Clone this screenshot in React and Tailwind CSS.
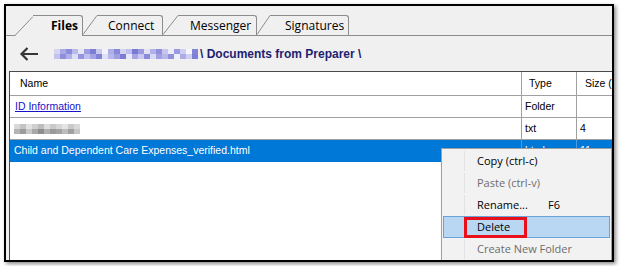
import React from "react";

const pathTop = ["#d5d5f3","#a9a9e6","#8c8cdc","#b9b9ec","#e6e6f8","#9d9de2","#7d7dd6","#c9c9f0","#f2f2fb","#aeaee8","#8888da","#d2d2f2","#bfbfee","#7a7ad4","#9b9be2","#e2e2f7","#b2b2ea","#8f8fde","#c5c5ef","#ededfa","#9a9ae1","#cfcff2","#f5f5fc","#8484d8"];
const pathBottom = ["#c3c3ee","#8e8edd","#b0b0e9","#dcdcf5","#9595df","#c0c0ee","#a3a3e4","#8181d7","#dedef6","#b7b7eb","#9e9ee3","#7c7cd5","#e8e8f9","#a6a6e5","#c8c8f0","#8b8bdb","#d9d9f5","#a0a0e3","#b6b6eb","#9090dd","#f0f0fb","#acace7","#d0d0f2","#7f7fd6"];
const rowTop = ["#d8d8d8","#c4c4c4","#e2e2e2","#cfcfcf","#bdbdbd","#dedede","#c9c9c9","#d6d6d6","#e4e4e4","#cacaca","#dadada"];
const rowBottom = ["#b4b4b4","#9c9c9c","#c8c8c8","#a8a8a8","#8e8e8e","#b0b0b0","#9a9a9a","#a4a4a4","#bcbcbc","#a0a0a0","#c6c6c6"];

const Mosaic = ({ top, bottom, w }) => (
  <div className="flex flex-col">
    <div className="flex">
      {top.map((c, i) => (
        <div key={i} className="h-[5px]" style={{ width: w, background: c }} />
      ))}
    </div>
    <div className="flex">
      {bottom.map((c, i) => (
        <div key={i} className="h-[5px]" style={{ width: w, background: c }} />
      ))}
    </div>
  </div>
);

// slanted left edge of a tab
const Slant = ({ w }) => (
  <svg width={w} height="20" viewBox={`0 0 ${w} 20`} className="block shrink-0">
    <polygon points={`0,20 ${w},0.5 ${w},20`} fill="#f0f0f0" />
    <line x1="0" y1="19.5" x2={w} y2="0.5" stroke="#8c8c8c" strokeWidth="1" />
  </svg>
);

const Tab = ({ label, slant, width, pl, active }) => (
  <div className={`flex items-end h-[20px] ${active ? "relative z-10 mb-[-1px] h-[21px]" : ""}`}>
    <Slant w={slant} />
    <div
      className={`h-full border-t border-r border-[#8c8c8c] rounded-tr-[3px] bg-[#f0f0f0] flex items-center text-[12px] text-black ${active ? "font-bold" : ""}`}
      style={{ width, paddingLeft: pl }}
    >
      {label}
    </div>
  </div>
);

const Row = ({ children, type, size, selected }) => (
  <div className={`flex h-[22px] border-b ${selected ? "bg-[#0078d7] text-white border-[#0078d7]" : "border-[#a0a0a0] text-black"}`}>
    <div className={`w-[512px] border-r ${selected ? "border-[#4a9be0]" : "border-[#a0a0a0]"} flex items-center pl-[4px]`}>
      {children}
    </div>
    <div className={`w-[55px] border-r ${selected ? "border-[#4a9be0]" : "border-[#a0a0a0]"} flex items-center pl-[3px]`}>{type}</div>
    <div className="flex-1 flex items-center pl-[3px]">{size}</div>
  </div>
);

const MenuItem = ({ label, extra, disabled, hot }) => (
  <div
    className={`relative mx-[1px] h-[22px] flex items-center border ${hot ? "bg-[#b9d7f3] border-[#6aa3dc]" : "border-transparent"}`}
  >
    <div className={`w-[21px] h-full shrink-0 ${hot ? "" : "border-r border-[#e2e2e2]"}`} />
    <div className={`pl-[12px] flex whitespace-nowrap ${disabled ? "text-[#6d6d6d]" : "text-black"}`}>
      <span className={extra ? "w-[71px]" : ""}>{label}</span>
      {extra && <span>{extra}</span>}
    </div>
    {hot && (
      <div className="absolute left-[20px] top-0 w-[63px] h-[21px] border-[3px] border-[#e8101a]" />
    )}
  </div>
);

export default function App() {
  return (
    <div className="w-[628px] h-[266px] bg-white pl-[4px] pt-[4px]">
      <div className="relative w-[610px] h-[258px] border-2 border-black bg-[#f0f0f0] overflow-hidden flex flex-col shadow-[2px_2px_4px_rgba(0,0,0,0.45)] font-['Open_Sans',sans-serif]">

        {/* TABS */}
        <div className="h-[30px] flex items-end border-b border-[#8c8c8c] shrink-0">
          <div className="w-[9px]" />
          <Tab label="Files" slant={18} width={50} pl={18} active />
          <Tab label="Connect" slant={14} width={66} pl={11} />
          <Tab label="Messenger" slant={15} width={79} pl={12} />
          <Tab label="Signatures" slant={13} width={79} pl={15} />
        </div>

        {/* PATH */}
        <div className="h-[35px] flex items-center pl-[13px] shrink-0">
          <svg width="20" height="14" viewBox="0 0 20 14" className="shrink-0">
            <path d="M19 7H2.5M8.5 1L2.5 7l6 6" fill="none" stroke="#363636" strokeWidth="2.2" />
          </svg>
          <div className="ml-[15px] mt-[1px]">
            <Mosaic top={pathTop} bottom={pathBottom} w={6} />
          </div>
          <span className="ml-[2px] text-[12px] font-bold text-[#1f1f70] font-['Liberation_Sans',Arial,sans-serif] whitespace-nowrap">
            \ Documents from Preparer \
          </span>
        </div>

        {/* LIST */}
        <div className="flex-1 ml-[3px] bg-white border-l border-t border-[#4a4a4a] font-['Liberation_Sans',Arial,sans-serif] text-[10.5px]">
          <div className="flex h-[24px] border-b border-[#a0a0a0] text-black">
            <div className="w-[512px] border-r border-[#a0a0a0] flex items-center pl-[10px]">Name</div>
            <div className="w-[55px] border-r border-[#a0a0a0] flex items-center pl-[7px]">Type</div>
            <div className="flex-1 flex items-center pl-[8px] whitespace-nowrap">Size (</div>
          </div>
          <Row type="Folder" size="">
            <span className="pl-[1px] text-[#1515c8] underline">ID Information</span>
          </Row>
          <Row type="txt" size="4">
            <Mosaic top={rowTop} bottom={rowBottom} w={6} />
          </Row>
          <Row type="html" size="11" selected>
            <span>Child and Dependent Care Expenses_verified.html</span>
          </Row>
        </div>

        {/* CONTEXT MENU */}
        <div className="absolute left-[435px] top-[142px] w-[171px] h-[130px] bg-[#f2f2f2] border border-[#a0a0a0] pt-[1px] text-[11px] shadow-[1px_1px_2px_rgba(0,0,0,0.2)]">
          <MenuItem label="Copy (ctrl-c)" />
          <MenuItem label="Paste (ctrl-v)" disabled />
          <MenuItem label="Rename..." extra="F6" />
          <MenuItem label="Delete" hot />
          <MenuItem label="Create New Folder" disabled />
        </div>
      </div>
    </div>
  );
}
